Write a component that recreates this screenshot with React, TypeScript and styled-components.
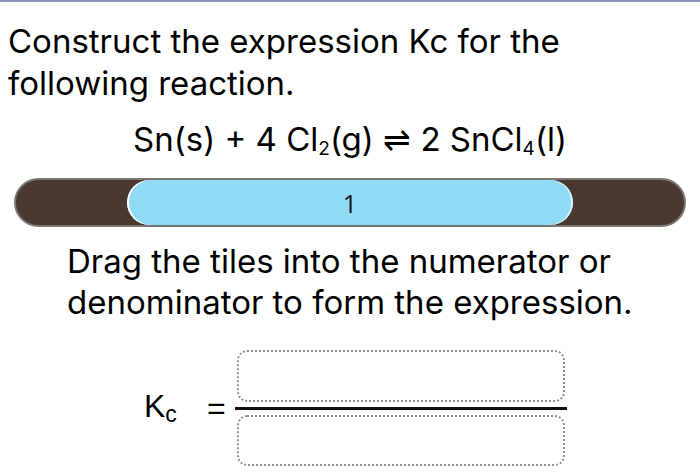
import React from "react";
import styled, { createGlobalStyle } from "styled-components";

const Global = createGlobalStyle`
  html, body { margin: 0; padding: 0; background: #fff; }
  body { width: 700px; height: 475px; overflow: hidden; }
`;

const Page = styled.div`
  position: relative;
  width: 700px;
  height: 475px;
  font-family: Inter, "Noto Sans", sans-serif;
  color: #000;
  border-top: 2px solid #8a8fbf;
  box-sizing: border-box;
`;

const Title = styled.div`
  padding: 18px 0 0 8px;
  font-size: 33px;
  line-height: 42px;
`;

const Equation = styled.div`
  text-align: center;
  font-size: 33px;
  line-height: 42px;
  margin-top: 14px;
  sub {
    font-size: 19px;
    vertical-align: -4px;
    line-height: 0;
  }
`;

const Bar = styled.div`
  margin: 18px 14px 0 14px;
  height: 49px;
  box-sizing: border-box;
  border: 2px solid #7b7775;
  border-radius: 25px;
  background: #4a3931;
  display: flex;
  padding-left: 111px;
`;

const Tile = styled.div`
  width: 446px;
  height: 100%;
  border-radius: 23px;
  background: #8fdbf6;
  box-shadow: inset 2px 0 0 #ffffff, inset -2px 0 0 #d4f2fb;
  display: flex;
  align-items: center;
  justify-content: center;
  font-family: "Open Sans", sans-serif;
  font-size: 25px;
  color: #111;
`;

const Instructions = styled.div`
  padding: 14px 0 0 67px;
  font-size: 33px;
  line-height: 41px;
`;

const FractionRow = styled.div`
  display: flex;
  align-items: center;
  margin-top: 27px;
  padding-left: 144px;
  font-family: "Liberation Sans", Arial, sans-serif;
`;

const K = styled.div`
  font-size: 32px;
  width: 63px;
  sub {
    font-size: 23px;
    vertical-align: -5px;
  }
`;

const Equals = styled.div`
  font-size: 32px;
  width: 28px;
`;

const Fraction = styled.div`
  display: flex;
  flex-direction: column;
  align-items: stretch;
  width: 332px;
`;

const Slot = styled.div<{ $h: number }>`
  height: ${(p) => p.$h}px;
  margin: 0 2px;
  box-sizing: border-box;
  border: 2px dotted #8c8c8c;
  border-radius: 10px;
`;

const Line = styled.div`
  height: 3px;
  background: #111;
  margin: 5px 0;
`;

export default function App() {
  return (
    <>
      <Global />
      <Page>
        <Title>
          Construct the expression Kc for the
          <br />
          following reaction.
        </Title>
        <Equation>
          Sn(s) + 4 Cl<sub>2</sub>(g) ⇌ 2 SnCl<sub>4</sub>(l)
        </Equation>
        <Bar>
          <Tile>1</Tile>
        </Bar>
        <Instructions>
          Drag the tiles into the numerator or
          <br />
          denominator to form the expression.
        </Instructions>
        <FractionRow>
          <K>
            K<sub>c</sub>
          </K>
          <Equals>=</Equals>
          <Fraction>
            <Slot $h={52} />
            <Line />
            <Slot $h={51} />
          </Fraction>
        </FractionRow>
      </Page>
    </>
  );
}
